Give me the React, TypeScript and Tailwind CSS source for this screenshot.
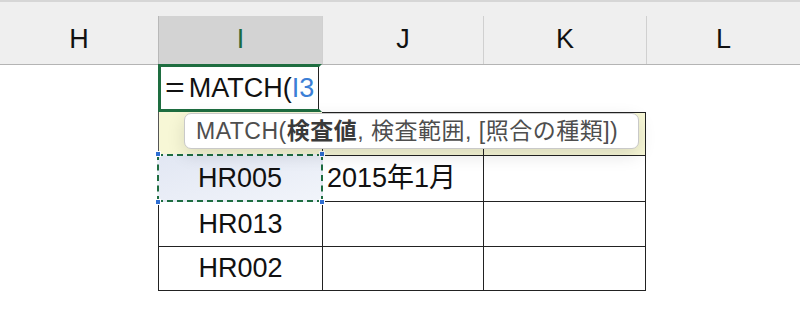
import React from "react";

const font = { fontFamily: '"Liberation Sans", "Noto Sans CJK JP", sans-serif' };

const columns = [
  { label: "H", w: "w-[158px]", active: false },
  { label: "I", w: "w-[164px]", active: true },
  { label: "J", w: "w-[161px]", active: false },
  { label: "K", w: "w-[163px]", active: false },
  { label: "L", w: "w-[154px]", active: false },
];

function Handle({ className }: { className: string }) {
  return (
    <span
      className={`absolute h-[6px] w-[6px] bg-[#2f6fd3] border border-white ${className}`}
    />
  );
}

export default function App() {
  return (
    <div
      className="relative w-[800px] h-[331px] overflow-hidden bg-white text-[27px] text-[#111]"
      style={font}
    >
      {/* column headers */}
      <div className="flex h-[65px] bg-[#efefef] border-t-2 border-[#d6d6d6] border-b border-b-[#b4b4b4]">
        {columns.map((c, i) => (
          <div key={c.label} className={`${c.w} flex flex-col justify-end`}>
            <div
              className={`h-[48px] flex items-center justify-center pb-[2px] ${
                i > 0 ? "border-l border-[#d0d0d0]" : ""
              } ${c.active ? "bg-[#d3d3d3] text-[#1d6b3f] border-l-[#b8b8b8]" : ""}`}
            >
              {c.label}
            </div>
          </div>
        ))}
      </div>

      {/* grid body */}
      <div className="relative grid grid-cols-[158px_164px_161px_163px_154px] grid-rows-[47px_43px_46px_45px_45px]">
        {/* row 1 */}
        <div />
        <div className="-mt-px border-[3px] border-[#1e6d40] border-r-transparent">
          <div className="h-full flex items-center pl-[4px] border-r border-[#222] whitespace-nowrap">
            <span className="inline-block scale-x-125 mr-[6px] ml-[2px]">=</span>MATCH(<span className="text-[#3c7fd6]">I3</span>
          </div>
        </div>
        <div />
        <div />
        <div />

        {/* row 2 */}
        <div />
        <div className="bg-[#f7f7d6] border-l border-[#555]" />
        <div className="bg-[#f7f7d6] border-l border-t border-[#222]" />
        <div className="bg-[#f7f7d6] border-l border-t border-r border-[#222]" />
        <div />

        {/* row 3 */}
        <div />
        <div className="relative">
          <div className="absolute -inset-x-px -top-px -bottom-px border-2 border-dashed border-[#1e6d40] bg-gradient-to-br from-[#e2e7f3] to-[#f1f4fa] flex items-center justify-center">
            HR005
          </div>
          <Handle className="-left-[3px] -top-[4px]" />
          <Handle className="-right-[3px] -top-[4px]" />
          <Handle className="-left-[3px] -bottom-[4px]" />
          <Handle className="-right-[3px] -bottom-[4px]" />
        </div>
        <div className="border-l border-t border-[#222] flex items-center pl-[4px] whitespace-nowrap">
          2015年1月
        </div>
        <div className="border-l border-t border-r border-[#222]" />
        <div />

        {/* row 4 */}
        <div />
        <div className="border-l border-t border-[#222] flex items-center justify-center">HR013</div>
        <div className="border-l border-t border-[#222]" />
        <div className="border-l border-t border-r border-[#222]" />
        <div />

        {/* row 5 */}
        <div />
        <div className="border-l border-t border-b border-[#222] flex items-center justify-center">HR002</div>
        <div className="border-l border-t border-b border-[#222]" />
        <div className="border-l border-t border-r border-b border-[#222]" />
        <div />

        {/* function tooltip */}
        <div className="absolute left-[184px] top-[48px] w-[455px] h-[36px] flex items-center pl-[11px] bg-white border border-[#c9c9c9] rounded-[7px] shadow-[0_6px_18px_rgba(0,0,0,0.12)] text-[23px] tracking-[0.5px] text-[#4e4e4e] whitespace-nowrap">
          MATCH(<b className="font-bold text-[#3a3a3a]">検査値</b>, 検査範囲, [照合の種類])
        </div>
      </div>
    </div>
  );
}
